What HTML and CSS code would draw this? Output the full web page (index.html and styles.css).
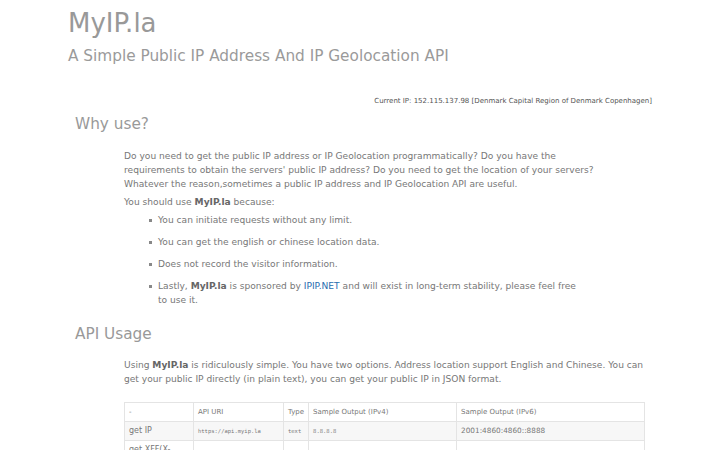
FILE: index.html
```html
<!DOCTYPE html>
<html lang="en">
<head>
  <meta charset="UTF-8" />
  <meta name="viewport" content="width=device-width, initial-scale=1.0" />
  <title>MyIP.la - A Simple Public IP Address And IP Geolocation API</title>
  <link rel="stylesheet" href="styles.css">
</head>
<body>
  <div class="wrap">
    <header class="top">
      <h1>MyIP.la</h1>
      <p class="sub">A Simple Public IP Address And IP Geolocation API</p>
    </header>

    <p class="current">Current IP: 152.115.137.98 [Denmark Capital Region of Denmark Copenhagen]</p>

    <h2>Why use?</h2>
    <div class="content why">
      <p>Do you need to get the public IP address or IP Geolocation programmatically? Do you have the requirements to obtain the servers' public IP address? Do you need to get the location of your servers? Whatever the reason,sometimes a public IP address and IP Geolocation API are useful.</p>
      <p>You should use <b>MyIP.la</b> because:</p>
      <ul>
        <li>You can initiate requests without any limit.</li>
        <li>You can get the english or chinese location data.</li>
        <li>Does not record the visitor information.</li>
        <li>Lastly, <b>MyIP.la</b> is sponsored by <a href="#">IPIP.NET</a> and will exist in long-term stability, please feel free to use it.</li>
      </ul>
    </div>

    <h2 class="usage">API Usage</h2>
    <div class="content usage-body">
      <p>Using <b>MyIP.la</b> is ridiculously simple. You have two options. Address location support English and Chinese. You can get your public IP directly (in plain text), you can get your public IP in JSON format.</p>
      <table class="api">
        <tr>
          <th class="c1">-</th>
          <th class="c2">API URI</th>
          <th class="c3">Type</th>
          <th class="c4">Sample Output (IPv4)</th>
          <th>Sample Output (IPv6)</th>
        </tr>
        <tr>
          <td>get IP</td>
          <td><code>https://api.myip.la</code></td>
          <td><code>text</code></td>
          <td><code>8.8.8.8</code></td>
          <td>2001:4860:4860::8888</td>
        </tr>
        <tr>
          <td>get XFF(X-Forwarded-For)</td>
          <td><code>https://api.myip.la/xff</code></td>
          <td><code>text</code></td>
          <td><code>8.8.8.8</code></td>
          <td>2001:4860:4860::8888</td>
        </tr>
      </table>
    </div>
  </div>
</body>
</html>
```

FILE: styles.css
```css
body {
  margin: 0;
  font-family: "DejaVu Sans", sans-serif;
  color: #777;
  background: #fff;
}
.wrap {
  width: 584px;
  margin: 0 auto;
}
.top h1 {
  margin: 0;
  padding-top: 6px;
  font-size: 26px;
  font-weight: normal;
  color: #999;
  line-height: 34px;
}
.top .sub {
  margin: 6px 0 0;
  font-size: 15.3px;
  color: #9a9a9a;
  line-height: 20px;
}
.current {
  margin: 31px 0 0;
  text-align: right;
  font-size: 7px;
  color: #555;
}
h2 {
  margin: 8px 0 0 7px;
  font-size: 15.3px;
  font-weight: normal;
  color: #999;
  line-height: 22px;
}
h2.usage {
  margin-top: 16px;
}
.content {
  margin: 14px 7px 0 56px;
  font-size: 9.1px;
  line-height: 14px;
}
.content.why {
  margin-right: 47px;
}
.content.usage-body {
  margin-top: 13px;
}
.content p {
  margin: 0 0 4px;
}
.content b {
  color: #666;
}
ul {
  margin: 0;
  padding: 0 21px 0 34px;
  list-style: none;
}
li {
  position: relative;
}
li + li {
  margin-top: 8px;
}
li::before {
  content: "";
  position: absolute;
  left: -9px;
  top: 6px;
  width: 3px;
  height: 3px;
  background: #888;
}
a {
  color: #2a6eb0;
  text-decoration: none;
}
.api {
  width: 100%;
  margin-top: 16px;
  border-collapse: collapse;
  font-size: 7.3px;
}
.api th, .api td {
  border: 1px solid #e4e4e4;
  padding: 4px 4px;
  text-align: left;
  font-weight: normal;
  line-height: 10px;
  white-space: nowrap;
}
.api th {
  font-size: 7px;
}
.api tr:nth-child(2) td {
  background: #f7f7f7;
}
.api td:first-child {
  font-size: 8px;
  white-space: normal;
}
.api code {
  font-family: "DejaVu Sans Mono", monospace;
  font-size: 5.5px;
  color: #777;
}
.c1 { width: 60px; }
.c2 { width: 81px; }
.c3 { width: 16px; }
.c4 { width: 139px; }
```
